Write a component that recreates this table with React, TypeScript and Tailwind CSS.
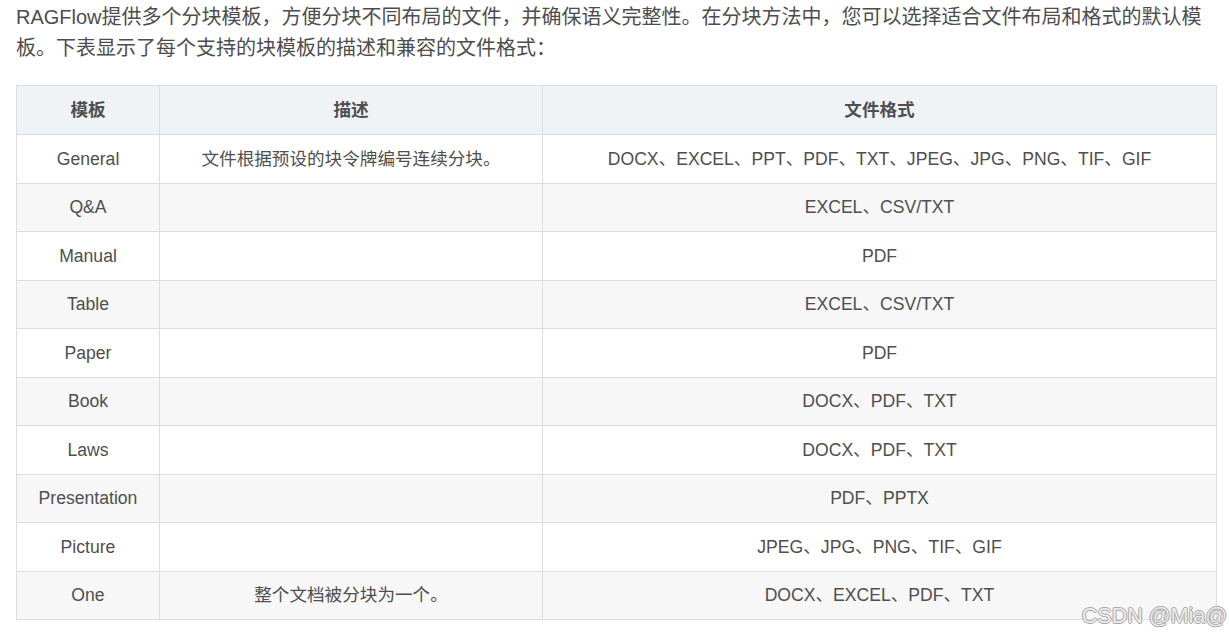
const rows: [string, string, string][] = [
  ["General", "文件根据预设的块令牌编号连续分块。", "DOCX、EXCEL、PPT、PDF、TXT、JPEG、JPG、PNG、TIF、GIF"],
  ["Q&A", "", "EXCEL、CSV/TXT"],
  ["Manual", "", "PDF"],
  ["Table", "", "EXCEL、CSV/TXT"],
  ["Paper", "", "PDF"],
  ["Book", "", "DOCX、PDF、TXT"],
  ["Laws", "", "DOCX、PDF、TXT"],
  ["Presentation", "", "PDF、PPTX"],
  ["Picture", "", "JPEG、JPG、PNG、TIF、GIF"],
  ["One", "整个文档被分块为一个。", "DOCX、EXCEL、PDF、TXT"],
];

export default function App() {
  return (
    <div
      className="relative w-[1229px] h-[635px] bg-white overflow-hidden pl-4 pr-3 pt-[2px] text-[#4d4d4d]"
      style={{ fontFamily: '"Liberation Sans", "Noto Sans CJK SC", sans-serif' }}
    >
      <p className="text-[20px] leading-[31px] text-[#4d4d4d]">
        RAGFlow提供多个分块模板，方便分块不同布局的文件，并确保语义完整性。在分块方法中，您可以选择适合文件布局和格式的默认模板。下表显示了每个支持的块模板的描述和兼容的文件格式：
      </p>

      <table className="mt-[21px] w-[1201px] border-collapse text-[17.6px] text-[#4f4f4f]">
        <thead>
          <tr className="bg-[#eff3f5]">
            <th className="w-[143px] h-[49px] border border-[#dddddd] font-bold text-center">模板</th>
            <th className="w-[383px] h-[49px] border border-[#dddddd] font-bold text-center">描述</th>
            <th className="h-[49px] border border-[#dddddd] font-bold text-center">文件格式</th>
          </tr>
        </thead>
        <tbody>
          {rows.map(([name, desc, fmt], i) => (
            <tr key={name} className={i % 2 === 1 ? "bg-[#f7f7f7]" : "bg-white"}>
              <td className="h-[48.5px] border border-[#dddddd] text-center">{name}</td>
              <td className="h-[48.5px] border border-[#dddddd] text-center">{desc}</td>
              <td className="h-[48.5px] border border-[#dddddd] text-center">{fmt}</td>
            </tr>
          ))}
        </tbody>
      </table>

      <div
        className="absolute right-[2px] bottom-[8px] text-[21.5px] leading-none text-[#ececec]"
        style={{ textShadow: "1px 0 0 #a8a8a8, -1px 0 0 #a8a8a8, 0 1px 0 #a8a8a8, 0 -1px 0 #a8a8a8" }}
      >
        CSDN @Mia@
      </div>
    </div>
  );
}
